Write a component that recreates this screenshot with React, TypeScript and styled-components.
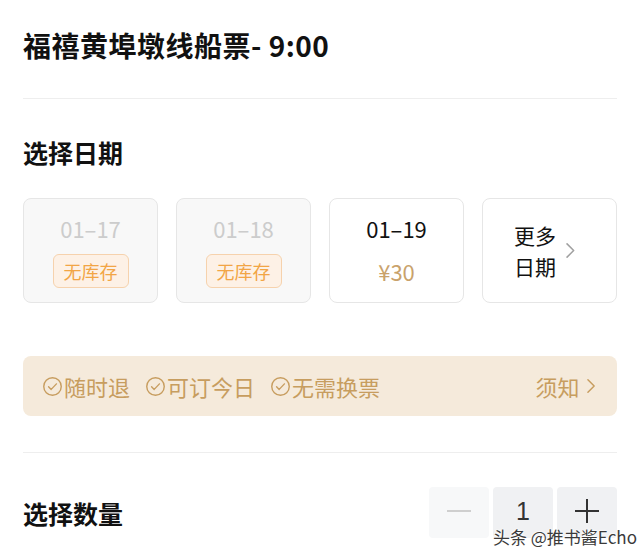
import styled, { createGlobalStyle } from "styled-components";

const GlobalStyle = createGlobalStyle`
  * {
    box-sizing: border-box;
  }
  body {
    margin: 0;
    background: #fff;
    font-family: "Noto Sans CJK SC", "Noto Sans", sans-serif;
    color: #111;
  }
`;

const Page = styled.div`
  position: relative;
  width: 640px;
  height: 557px;
  padding: 0 23px;
  overflow: hidden;
  background: #fff;
`;

const TitleBlock = styled.header`
  padding: 25px 0 33px;
  border-bottom: 1px solid #eeeeee;
`;

const Title = styled.h1`
  margin: 0;
  font-size: 28px;
  line-height: 40px;
  font-weight: 700;
  letter-spacing: 0.5px;
  color: #111;
`;

const SectionTitle = styled.h2`
  margin: 0;
  font-size: 25px;
  line-height: 36px;
  font-weight: 700;
  color: #111;
`;

const DateSection = styled.section`
  padding-top: 35px;
`;

const DateRow = styled.div`
  display: grid;
  grid-template-columns: repeat(4, 135px);
  justify-content: space-between;
  margin-top: 28px;
`;

const DateCard = styled.div<{ $disabled?: boolean }>`
  height: 105px;
  display: flex;
  flex-direction: column;
  align-items: center;
  padding-top: 15px;
  gap: 11px;
  border: 1px solid #e6e6e6;
  border-radius: 8px;
  background: ${(p) => (p.$disabled ? "#f8f8f8" : "#fff")};
`;

const DateText = styled.div<{ $disabled?: boolean }>`
  font-size: 22px;
  line-height: 29px;
  color: ${(p) => (p.$disabled ? "#cccccc" : "#111")};
`;

const SoldOut = styled.div`
  height: 34px;
  padding: 0 10px;
  display: flex;
  align-items: center;
  font-size: 18px;
  color: #f2a545;
  background: #fdf1e6;
  border: 1px solid #f6d2ad;
  border-radius: 6px;
`;

const Price = styled.div`
  height: 34px;
  display: flex;
  align-items: center;
  font-size: 22px;
  color: #c9a26b;
`;

const MoreCard = styled.div`
  height: 105px;
  display: flex;
  align-items: center;
  justify-content: center;
  gap: 9px;
  padding-right: 10px;
  border: 1px solid #e6e6e6;
  border-radius: 8px;
  background: #fff;
`;

const MoreText = styled.div`
  font-size: 21px;
  line-height: 31px;
  color: #111;
`;

const Banner = styled.div`
  margin-top: 53px;
  height: 60px;
  display: flex;
  align-items: center;
  justify-content: space-between;
  padding: 0 21px 0 19px;
  background: #f5eadb;
  border-radius: 8px;
  color: #c79d5f;
`;

const Perks = styled.div`
  display: flex;
  gap: 15px;
`;

const Perk = styled.span`
  display: flex;
  align-items: center;
  gap: 1px;
  font-size: 22px;
  line-height: 30px;
`;

const Notice = styled.span`
  display: flex;
  align-items: center;
  gap: 7px;
  font-size: 22px;
  line-height: 30px;
`;

const QuantityRow = styled.section`
  margin-top: 36px;
  border-top: 1px solid #eeeeee;
  padding-top: 34px;
  display: flex;
  align-items: center;
  justify-content: space-between;
`;

const Stepper = styled.div`
  display: flex;
  gap: 4px;
`;

const StepBox = styled.div<{ $light?: boolean }>`
  width: 60px;
  height: 51px;
  display: flex;
  align-items: center;
  justify-content: center;
  padding-bottom: 3px;
  border-radius: 4px;
  background: ${(p) => (p.$light ? "#f7f8f9" : "#f0f1f3")};
  font-family: "Liberation Sans", Arial, sans-serif;
  font-size: 25px;
  color: #333;
`;

const Watermark = styled.div`
  position: absolute;
  right: 3px;
  bottom: 10px;
  font-size: 17px;
  line-height: 20px;
  color: #3a3a3a;
  text-shadow: 0 0 2px #fff, 0 0 2px #fff, 0 0 3px #fff;
  white-space: nowrap;
`;

function CheckCircle() {
  return (
    <svg width="21" height="21" viewBox="0 0 24 24" fill="none">
      <circle cx="12" cy="12" r="10" stroke="currentColor" strokeWidth="1.6" />
      <path
        d="M7.5 12.3l3 3 6-6.3"
        stroke="currentColor"
        strokeWidth="1.6"
        strokeLinecap="round"
        strokeLinejoin="round"
      />
    </svg>
  );
}

function Chevron({ color, size }: { color: string; size: number }) {
  return (
    <svg width={size * 0.6} height={size} viewBox="0 0 10 16" fill="none">
      <path
        d="M2 1.5l6.5 6.5L2 14.5"
        stroke={color}
        strokeWidth="1.5"
        strokeLinecap="round"
        strokeLinejoin="round"
      />
    </svg>
  );
}

function MinusIcon() {
  return (
    <svg width="26" height="26" viewBox="0 0 26 26">
      <path d="M1 13h24" stroke="#cfcfcf" strokeWidth="2" />
    </svg>
  );
}

function PlusIcon() {
  return (
    <svg width="26" height="26" viewBox="0 0 26 26">
      <path d="M1 13h24M13 1v24" stroke="#333" strokeWidth="2" />
    </svg>
  );
}

const dates = [
  { day: "01–17", soldOut: true },
  { day: "01–18", soldOut: true },
  { day: "01–19", soldOut: false, price: "¥30" },
];

const perks = ["随时退", "可订今日", "无需换票"];

export default function App() {
  return (
    <>
      <GlobalStyle />
      <Page>
        <TitleBlock>
          <Title>福禧黄埠墩线船票- 9:00</Title>
        </TitleBlock>

        <DateSection>
          <SectionTitle>选择日期</SectionTitle>
          <DateRow>
            {dates.map((d) => (
              <DateCard key={d.day} $disabled={d.soldOut}>
                <DateText $disabled={d.soldOut}>{d.day}</DateText>
                {d.soldOut ? <SoldOut>无库存</SoldOut> : <Price>{d.price}</Price>}
              </DateCard>
            ))}
            <MoreCard>
              <MoreText>
                更多
                <br />
                日期
              </MoreText>
              <Chevron color="#a0a0a0" size={17} />
            </MoreCard>
          </DateRow>
        </DateSection>

        <Banner>
          <Perks>
            {perks.map((p) => (
              <Perk key={p}>
                <CheckCircle />
                {p}
              </Perk>
            ))}
          </Perks>
          <Notice>
            须知
            <Chevron color="#c79d5f" size={16} />
          </Notice>
        </Banner>

        <QuantityRow>
          <SectionTitle>选择数量</SectionTitle>
          <Stepper>
            <StepBox $light>
              <MinusIcon />
            </StepBox>
            <StepBox>1</StepBox>
            <StepBox>
              <PlusIcon />
            </StepBox>
          </Stepper>
        </QuantityRow>

        <Watermark>头条 @推书酱Echo</Watermark>
      </Page>
    </>
  );
}
